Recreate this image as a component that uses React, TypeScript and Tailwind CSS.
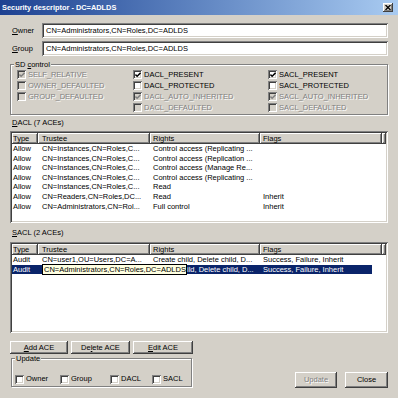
import React from "react";

const raised =
  "shadow-[inset_-1px_-1px_#404040,inset_1px_1px_#ffffff,inset_-2px_-2px_#808080]";
const sunken =
  "shadow-[inset_1px_1px_#808080,inset_-1px_-1px_#ffffff,inset_2px_2px_#404040,inset_-2px_-2px_#d4d0c8]";
const etched = "border border-[#808080] shadow-[inset_1px_1px_#ffffff,1px_1px_#ffffff]";
const grayText = "text-[#808080] [text-shadow:1px_1px_0_#ffffff]";

type CheckProps = { label: React.ReactNode; checked?: boolean; disabled?: boolean };

const Check: React.FC<CheckProps> = ({ label, checked, disabled }) => (
  <div className="flex items-center gap-[2px] h-full">
    <span
      className={`w-[9px] h-[9px] flex items-center justify-center shrink-0 ${sunken} ${
        disabled ? "bg-[#d4d0c8]" : "bg-white"
      }`}
    >
      {checked && (
        <svg viewBox="0 0 7 7" className="w-[6px] h-[6px]">
          <path
            d="M0.5 3 L2.5 5 L6.5 1"
            fill="none"
            stroke={disabled ? "#808080" : "#000000"}
            strokeWidth="1.7"
          />
        </svg>
      )}
    </span>
    <span className={disabled ? grayText : "text-black"}>{label}</span>
  </div>
);

const cols = [
  "w-[26px] pl-[1px] shrink-0",
  "w-[112px] pl-[4px] shrink-0",
  "w-[110px] pl-[3px] shrink-0",
  "w-[122px] pl-[3px] shrink-0",
];

const Header = () => (
  <div className="flex h-[11px] shrink-0">
    {["Type", "Trustee", "Rights", "Flags"].map((h, i) => (
      <div key={h} className={`${cols[i]} ${raised} bg-[#d4d0c8] flex items-center`}>
        {h}
      </div>
    ))}
    <div className={`flex-1 ${raised} bg-[#d4d0c8]`} />
  </div>
);

type Ace = { type: string; trustee: string; rights: string; flags: string; covered?: boolean };

const Rows: React.FC<{ rows: Ace[]; selected?: number }> = ({ rows, selected }) => (
  <>
    {rows.map((r, i) => (
      <div
        key={i}
        className={`flex h-[9.6px] items-center whitespace-nowrap ${
          selected === i ? "bg-[#0a246a] text-white w-[360px] overflow-hidden" : ""
        }`}
      >
        <div className={cols[0]}>{r.type}</div>
        <div className={cols[1]}>{r.trustee}</div>
        {/* part of this cell sits under the tooltip */}
        <div className={`${cols[2]} ${r.covered ? "!pl-[37px]" : ""}`}>{r.rights}</div>
        <div className={cols[3]}>{r.flags}</div>
      </div>
    ))}
  </>
);

const dacl: Ace[] = [
  { type: "Allow", trustee: "CN=Instances,CN=Roles,C...", rights: "Control access (Replicating ...", flags: "" },
  { type: "Allow", trustee: "CN=Instances,CN=Roles,C...", rights: "Control access (Replication ...", flags: "" },
  { type: "Allow", trustee: "CN=Instances,CN=Roles,C...", rights: "Control access (Manage Re...", flags: "" },
  { type: "Allow", trustee: "CN=Instances,CN=Roles,C...", rights: "Control access (Replicating ...", flags: "" },
  { type: "Allow", trustee: "CN=Instances,CN=Roles,C...", rights: "Read", flags: "" },
  { type: "Allow", trustee: "CN=Readers,CN=Roles,DC...", rights: "Read", flags: "Inherit" },
  { type: "Allow", trustee: "CN=Administrators,CN=Rol...", rights: "Full control", flags: "Inherit" },
];

const sacl: Ace[] = [
  { type: "Audit", trustee: "CN=user1,OU=Users,DC=A...", rights: "Create child, Delete child, D...", flags: "Success, Failure, Inherit" },
  { type: "Audit", trustee: "", rights: "ild, Delete child, D...", flags: "Success, Failure, Inherit", covered: true },
];

const Button: React.FC<{ children: React.ReactNode; className?: string; disabled?: boolean }> = ({
  children,
  className,
  disabled,
}) => (
  <div
    className={`${raised} bg-[#d4d0c8] flex items-center justify-center ${className ?? ""} ${
      disabled ? grayText : ""
    }`}
  >
    {children}
  </div>
);

export default function App() {
  return (
    <div className="w-[398px] h-[398px] bg-[#d4d0c8] font-['Liberation_Sans',Arial,sans-serif] text-[7.5px] leading-none text-black flex flex-col overflow-hidden">
      {/* title bar */}
      <div className="h-[15px] shrink-0 bg-gradient-to-r from-[#1e4191] to-[#a9cbf1] flex items-center pl-[2px]">
        <span className="text-white font-bold text-[7.4px]">Security descriptor - DC=ADLDS</span>
        <div className={`ml-auto mr-[5px] w-[10px] h-[9px] bg-[#d4d0c8] ${raised} flex items-center justify-center`}>
          <svg viewBox="0 0 6 5" className="w-[6px] h-[5px]">
            <path d="M0.5 0 L5.5 5 M5.5 0 L0.5 5" stroke="#000" strokeWidth="1.3" />
          </svg>
        </div>
      </div>

      {/* owner / group */}
      <div className="flex items-center mt-[8px] h-[15px] pl-[12px]">
        <span className="w-[30px]">
          <span className="underline">O</span>wner
        </span>
        <div className={`w-[346px] h-full bg-white ${sunken} flex items-center pl-[4px]`}>
          CN=Administrators,CN=Roles,DC=ADLDS
        </div>
      </div>
      <div className="flex items-center mt-[3px] h-[15px] pl-[12px]">
        <span className="w-[30px]">
          <span className="underline">G</span>roup
        </span>
        <div className={`w-[346px] h-full bg-white ${sunken} flex items-center pl-[4px]`}>
          CN=Administrators,CN=Roles,DC=ADLDS
        </div>
      </div>

      {/* SD control */}
      <div className={`relative mt-[8px] mx-[10px] ${etched} pt-[4px] pb-[1px] pl-[6px]`}>
        <span className="absolute -top-[5px] left-[3px] px-[1px] bg-[#d4d0c8] h-[9px] flex items-center">
          SD <span className="underline ml-[2px]">c</span>ontrol
        </span>
        <div className="grid grid-cols-[116px_135px_1fr] auto-rows-[11px]">
          <Check label="SELF_RELATIVE" checked disabled />
          <Check label="DACL_PRESENT" checked />
          <Check label="SACL_PRESENT" checked />
          <Check label="OWNER_DEFAULTED" disabled />
          <Check label="DACL_PROTECTED" />
          <Check label="SACL_PROTECTED" />
          <Check label="GROUP_DEFAULTED" disabled />
          <Check label="DACL_AUTO_INHERITED" checked disabled />
          <Check label="SACL_AUTO_INHERITED" checked disabled />
          <div />
          <Check label="DACL_DEFAULTED" disabled />
          <Check label="SACL_DEFAULTED" disabled />
        </div>
      </div>

      {/* DACL */}
      <div className="mt-[3px] h-[10px] pl-[12px] flex items-center">
        <span className="underline">D</span>ACL (7 ACEs)
      </div>
      <div className={`mt-[3px] mx-[10px] h-[92px] bg-white ${sunken} p-[2px] flex flex-col`}>
        <Header />
        <Rows rows={dacl} />
      </div>

      {/* SACL */}
      <div className="mt-[5px] h-[10px] pl-[12px] flex items-center">
        <span className="underline">S</span>ACL (2 ACEs)
      </div>
      <div className={`relative mt-[4px] mx-[10px] h-[91px] bg-white ${sunken} p-[2px] flex flex-col`}>
        <Header />
        <Rows rows={sacl} selected={1} />
        <div className="absolute left-[32px] top-[22px] w-[145px] h-[11px] bg-[#ffffe1] border border-black text-black flex items-center pl-[1px] whitespace-nowrap">
          CN=Administrators,CN=Roles,DC=ADLDS
        </div>
      </div>

      {/* ACE buttons */}
      <div className="flex gap-[3px] mt-[8px] h-[13px] pl-[10px]">
        <Button className="w-[58px]">
          <span className="underline">A</span>dd ACE
        </Button>
        <Button className="w-[59px]">
          De<span className="underline">l</span>ete ACE
        </Button>
        <Button className="w-[60px]">
          <span className="underline">E</span>dit ACE
        </Button>
      </div>

      {/* update */}
      <div className="flex items-start">
        <div className={`relative mt-[4px] ml-[11px] w-[181px] ${etched} pt-[15px] pb-[2px] pl-[3px]`}>
          <span className="absolute -top-[5px] left-[3px] px-[1px] bg-[#d4d0c8] h-[9px] flex items-center">
            Update
          </span>
          <div className="flex h-[10px]">
            <div className="w-[45px]">
              <Check label="Owner" />
            </div>
            <div className="w-[50px]">
              <Check label="Group" />
            </div>
            <div className="w-[42px]">
              <Check label="DACL" />
            </div>
            <Check label="SACL" />
          </div>
        </div>
        <div className="ml-auto mr-[10px] mt-[18px] flex gap-[8px]">
          <Button className="w-[42px] h-[16px]" disabled>
            Update
          </Button>
          <Button className="w-[43px] h-[16px]">Close</Button>
        </div>
      </div>
    </div>
  );
}
